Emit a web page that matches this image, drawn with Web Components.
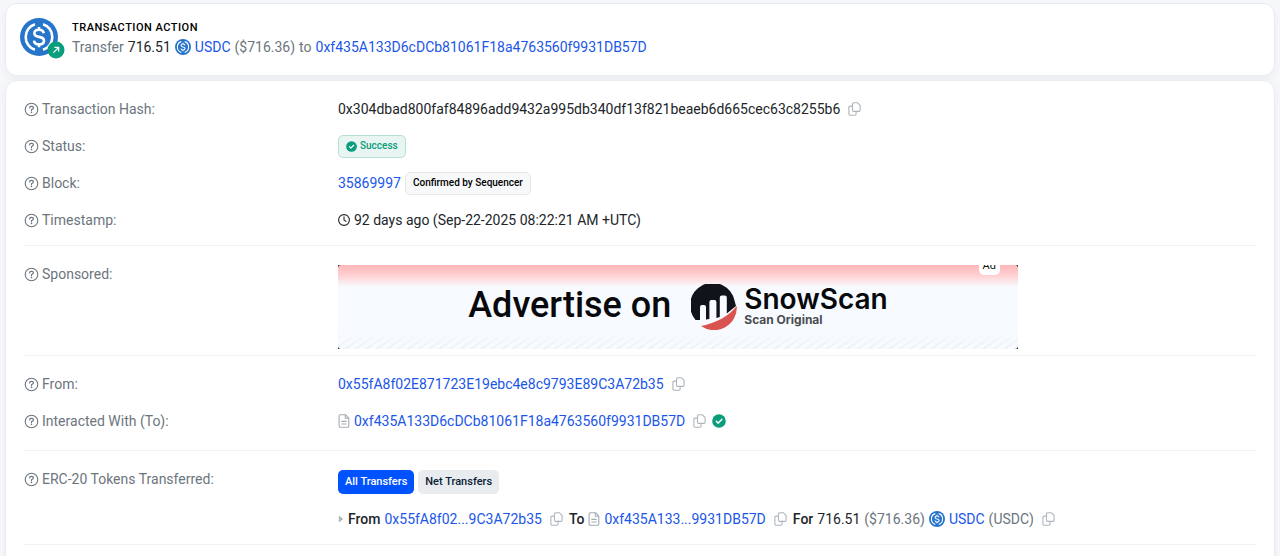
<!DOCTYPE html>
<html lang="en">
<head>
<meta charset="utf-8">
<meta name="viewport" content="width=device-width, initial-scale=1">
<title>Transaction Details</title>
<style>
  body {
    margin: 0;
    background: #f7f8fa;
    color: #212529;
    font: 14px/24px Roboto, sans-serif;
    --link: #1a56e8;
    --muted: #6c757d;
    --line: #eff1f3;
    --green: #0a9d7c;
  }
  main {
    display: flex;
    flex-direction: column;
    gap: 4px;
    padding: 3px 5px 0;
    height: 100vh;
    box-sizing: border-box;
    overflow: hidden;
  }
  tx-card { flex: none; }
</style>
</head>
<body>

<template id="txCard">
  <style>
    :host {
      display: block;
      padding: 16px 18px;
      border: 1px solid #e9ecef;
      border-radius: 12px;
      background: #fff;
      box-shadow: 0 4px 8px rgba(189, 197, 209, .2);
    }
  </style>
  <slot></slot>
</template>

<template id="txAction">
  <style>
    :host { display: flex; align-items: flex-start; gap: 8px; margin-left: -4px; min-height: 39px; }
    .logo { position: relative; display: flex; width: 44px; margin-top: -2px; }
    .badge { position: absolute; left: 27px; top: 23px; display: flex; }
    h1 { margin: 0; color: #000; font-size: 11px; line-height: 14px; font-weight: 500; text-transform: uppercase; letter-spacing: .5px; }
    .body { padding-top: 1px; }
    .line { display: flex; align-items: center; gap: 4px; color: var(--muted); }
  </style>
  <div class="logo">
    <usdc-logo size="38"></usdc-logo>
    <span class="badge">
      <svg width="18" height="18" viewBox="0 0 18 18" aria-hidden="true">
        <circle cx="9" cy="9" r="8.5" fill="#0a9d7c"/>
        <path d="M6.4 11.6 11.4 6.600M7.400 6.400h4.200v4.200" fill="none" stroke="#fff" stroke-width="1.300"/>
      </svg>
    </span>
  </div>
  <div class="body">
    <h1><slot name="title"></slot></h1>
    <div class="line"><slot></slot></div>
  </div>
</template>

<template id="txSection">
  <style>
    :host { display: flex; flex-direction: column; gap: 13px; padding: 16px 0 13px; border-bottom: 1px solid var(--line); }
    :host(:first-of-type) { padding-top: 0; }
    :host([tight]) { padding-bottom: 6px; }
    :host([loose]) { padding-bottom: 17px; }
  </style>
  <slot></slot>
</template>

<template id="txRow">
  <style>
    :host { display: grid; grid-template-columns: 314px minmax(0, 1fr); }
    .label { display: flex; align-items: center; gap: 3px; height: 24px; color: var(--muted); }
    .value { display: flex; align-items: center; gap: 4px; min-height: 24px; white-space: nowrap; }
    :host([stack]) .value { flex-direction: column; align-items: flex-start; gap: 13px; padding-top: 3px; }
  </style>
  <div class="label">
    <svg width="15" height="15" viewBox="0 0 15 15" aria-hidden="true">
      <circle cx="7.500" cy="7.500" r="6.300" fill="none" stroke="#6c757d" stroke-width="1.100"/>
      <path d="M5.600 5.900c0-1 .700-1.600 1.700-1.600h.5c.9 0 1.600.7 1.600 1.500 0 .6-.3 1-.8 1.300l-1.100.7v.8" fill="none" stroke="#6c757d" stroke-width="1.200" stroke-linecap="round"/>
      <circle cx="7.500" cy="10.400" r=".8" fill="#6c757d"/>
    </svg>
    <slot name="label"></slot>
  </div>
  <div class="value"><slot></slot></div>
</template>

<template id="txLine">
  <style>
    :host { display: flex; align-items: center; gap: 4px; }
    :host([buttons]) { gap: 4px; }
  </style>
  <slot></slot>
</template>

<template id="txLink">
  <style>
    :host { display: inline-block; }
    a { color: var(--link); text-decoration: none; }
    a:hover { color: #0034c4; }
  </style>
  <a href="#"><slot></slot></a>
</template>

<template id="txBadge">
  <style>
    :host {
      display: inline-flex;
      align-items: center;
      gap: 3px;
      box-sizing: border-box;
      height: 23px;
      padding: 0 7px;
      border: 1px solid #e6e8ea;
      border-radius: 5px;
      background: #f8f9fa;
      color: #000;
      font-size: 10px;
      font-weight: 500;
    }
    :host([success]) { border-color: #b5e0d6; background: #e9f5f2; color: var(--green); }
  </style>
  <slot></slot>
</template>

<template id="copyButton">
  <style>
    :host { display: inline-flex; margin: 0 2px 0 4px; }
    button { display: flex; padding: 0; border: 0; background: none; cursor: pointer; }
  </style>
  <button type="button" aria-label="Copy">
    <svg width="13" height="14" viewBox="0 0 13 14" fill="none" stroke="#adb5bd" stroke-width="1.100" stroke-linejoin="round" aria-hidden="true">
      <path d="M5.600.800h3.900l2.600 2.500v5c0 .7-.4 1.100-1.100 1.100H5.600c-.7 0-1.100-.4-1.100-1.100V1.900c0-.7.4-1.100 1.100-1.100z"/>
      <path d="M4.400 4.100H2c-.7 0-1.100.4-1.100 1.100v6.900c0 .7.400 1.100 1.100 1.100h5c.7 0 1.100-.4 1.100-1.100V9.600"/>
    </svg>
  </button>
</template>

<template id="tabButton">
  <style>
    :host { display: inline-flex; }
    button {
      height: 24px;
      padding: 0 7px;
      border: 0;
      border-radius: 5px;
      background: #e9ecef;
      color: #081d35;
      font: 500 11px/24px Roboto, sans-serif;
      cursor: pointer;
    }
    :host([active]) button { background: #0052ff; color: #fff; }
  </style>
  <button type="button"><slot></slot></button>
</template>

<template id="adBanner">
  <style>
    :host { display: block; width: 100%; max-width: 680px; background: #222; }
    .ad {
      position: relative;
      display: flex;
      align-items: center;
      justify-content: center;
      gap: 20px;
      height: 84px;
      overflow: hidden;
      border-radius: 3px;
      color: #08090c;
      background:
        linear-gradient(rgba(247, 251, 254, 1) 82%, rgba(247, 251, 254, .3)) 0 0 / 0 0 no-repeat,
        linear-gradient(#ffb6b8, #ffcfd1 10px, #f8fbff 22px, rgba(247, 251, 255, 0) 23px),
        linear-gradient(#f7fbff 68px, rgba(247, 251, 255, .5)),
        repeating-linear-gradient(145deg, #e4e7ea 0 2px, #f7fbff 2px 6px);
    }
    .lead { font-size: 36px; line-height: 80px; font-weight: 500; padding-bottom: 4px; }
    .brand { display: flex; align-items: center; gap: 7px; }
    .name { font: 600 28px/26px Inter, sans-serif; }
    .sub { font: 700 12px/16px Inter, sans-serif; color: #4a4c50; }
    .tag {
      position: absolute;
      top: -8px;
      right: 18px;
      padding: 0 4px;
      border-radius: 5px;
      background: #fff;
      color: #111;
      font-size: 11px;
      line-height: 18px;
    }
  </style>
  <div class="ad">
    <span class="lead">Advertise on</span>
    <div class="brand">
      <svg width="46" height="46" viewBox="0 0 46 46" aria-hidden="true">
        <path d="M7 36H4.500A22.500 22.500 0 1 1 43.500 16.500L45 22 35.800 29.500V13.500a2 2 0 0 0-2-2h-3a2 2 0 0 0-2 2V33l-3.400 1V18a2 2 0 0 0-2-2h-3a2 2 0 0 0-2 2v17l-3.400.5V23a2 2 0 0 0-2-2h-2a2 2 0 0 0-2 2v13z" fill="#11131a"/>
        <path d="M10 42C25 39 38 32 45.800 22A22.700 22.700 0 0 1 10 42z" fill="#d9534f"/>
      </svg>
      <div>
        <div class="name">SnowScan</div>
        <div class="sub">Scan Original</div>
      </div>
    </div>
    <span class="tag">Ad</span>
  </div>
</template>

<main>
  <tx-card>
    <tx-action>
      <span slot="title">Transaction Action</span>
      <span>Transfer</span>
      <span style="color: #212529">716.51</span>
      <usdc-logo size="16"></usdc-logo>
      <tx-link>USDC</tx-link>
      <span>($716.36)</span>
      <span>to</span>
      <tx-link>0xf435A133D6cDCb81061F18a4763560f9931DB57D</tx-link>
    </tx-action>
  </tx-card>

  <tx-card>
    <tx-section>
      <tx-row>
        <span slot="label">Transaction Hash:</span>
        <span>0x304dbad800faf84896add9432a995db340df13f821beaeb6d665cec63c8255b6</span>
        <copy-button></copy-button>
      </tx-row>
      <tx-row>
        <span slot="label">Status:</span>
        <tx-badge success><tx-icon name="check" size="11"></tx-icon>Success</tx-badge>
      </tx-row>
      <tx-row>
        <span slot="label">Block:</span>
        <tx-link>35869997</tx-link>
        <tx-badge>Confirmed by Sequencer</tx-badge>
      </tx-row>
      <tx-row>
        <span slot="label">Timestamp:</span>
        <tx-icon name="clock" size="12"></tx-icon>
        <span>92 days ago (Sep-22-2025 08:22:21 AM +UTC)</span>
      </tx-row>
    </tx-section>

    <tx-section tight>
      <tx-row stack>
        <span slot="label">Sponsored:</span>
        <ad-banner></ad-banner>
      </tx-row>
    </tx-section>

    <tx-section loose>
      <tx-row>
        <span slot="label">From:</span>
        <tx-link>0x55fA8f02E871723E19ebc4e8c9793E89C3A72b35</tx-link>
        <copy-button></copy-button>
      </tx-row>
      <tx-row>
        <span slot="label">Interacted With (To):</span>
        <tx-icon name="file" size="12"></tx-icon>
        <tx-link>0xf435A133D6cDCb81061F18a4763560f9931DB57D</tx-link>
        <copy-button></copy-button>
        <tx-icon name="check" size="14"></tx-icon>
      </tx-row>
    </tx-section>

    <tx-section>
      <tx-row stack>
        <span slot="label">ERC-20 Tokens Transferred:</span>
        <tx-line>
          <tab-button active>All Transfers</tab-button>
          <tab-button>Net Transfers</tab-button>
        </tx-line>
        <tx-line>
          <tx-icon name="caret" size="6"></tx-icon>
          <span style="font-weight: 500">From</span>
          <tx-link>0x55fA8f02...9C3A72b35</tx-link>
          <copy-button></copy-button>
          <span style="font-weight: 500">To</span>
          <tx-icon name="file" size="12"></tx-icon>
          <tx-link>0xf435A133...9931DB57D</tx-link>
          <copy-button></copy-button>
          <span style="font-weight: 500">For</span>
          <span>716.51</span>
          <span style="color: var(--muted)">($716.36)</span>
          <usdc-logo size="16"></usdc-logo>
          <tx-link>USDC</tx-link>
          <span style="color: var(--muted)">(USDC)</span>
          <copy-button></copy-button>
        </tx-line>
      </tx-row>
    </tx-section>
    <tx-section></tx-section>
  </tx-card>
</main>

<script>
  (function () {
    'use strict';

    function define(name, templateId) {
      customElements.define(name, class extends HTMLElement {
        constructor() {
          super();
          const temp = document.querySelector(templateId);
          this.attachShadow({ mode: 'open' }).appendChild(document.importNode(temp.content, true));
        }
      });
    }

    const icons = {
      check: '<svg viewBox="0 0 14 14"><circle cx="7" cy="7" r="6.800" fill="#0a9d7c"/><path d="M4.300 7.200l1.900 1.900 3.600-3.700" fill="none" stroke="#fff" stroke-width="1.500" stroke-linecap="round" stroke-linejoin="round"/></svg>',
      clock: '<svg viewBox="0 0 12 12" fill="none" stroke="#212529" stroke-width="1.100" stroke-linecap="round"><circle cx="6" cy="6" r="5.400"/><path d="M6 2.900V6l2 1.400"/></svg>',
      file: '<svg viewBox="0 0 12 14" fill="none" stroke="#a3aab1" stroke-width="1.100" stroke-linejoin="round"><path d="M2.400.700h5l3.400 3.400v7.900c0 .8-.5 1.300-1.300 1.300H2.400c-.8 0-1.300-.5-1.300-1.300V2C1.100 1.200 1.600.700 2.400.700z"/><path d="M7.300.800v3.400h3.500M3.400 7.400h5.200M3.400 10h5.200"/></svg>',
      caret: '<svg viewBox="0 0 6 8"><path d="M.800.500 5.200 4 .800 7.500z" fill="#adb5bd"/></svg>'
    };

    class TxIcon extends HTMLElement {
      constructor() {
        super();
        this.attachShadow({ mode: 'open' });
      }

      connectedCallback() {
        const size = this.getAttribute('size');
        this.shadowRoot.innerHTML = `
          <style>
            :host { display: inline-flex; flex: none; }
            svg { display: block; width: ${size}px; }
          </style>
          ${icons[this.getAttribute('name')]}`;
      }
    }

    class UsdcLogo extends HTMLElement {
      constructor() {
        super();
        this.attachShadow({ mode: 'open' });
      }

      connectedCallback() {
        const size = this.getAttribute('size');
        this.shadowRoot.innerHTML = `
          <style>
            :host { display: inline-flex; flex: none; }
            svg { display: block; width: ${size}px; height: ${size}px; }
          </style>
          <svg viewBox="0 0 32 32" role="img" aria-label="USDC">
            <circle cx="16" cy="16" r="16" fill="#2775ca"/>
            <path d="M12.600 5.200C7.900 6.600 4.800 11 4.800 16s3.100 9.400 7.800 10.800M19.400 5.200c4.700 1.400 7.800 5.800 7.800 10.800s-3.100 9.400-7.800 10.800" fill="none" stroke="#fff" stroke-width="2.200"/>
            <path d="M20 12.800c-.3-1.800-1.600-2.900-4-2.900s-3.900 1.200-3.900 2.900c0 2 1.600 2.700 4 3.100 2.500.4 4.100 1.200 4.100 3.200 0 1.900-1.600 3.100-4.200 3.100s-4-1.200-4.200-3.200M16 7.600v2.400M16 22v2.600" fill="none" stroke="#fff" stroke-width="2.200"/>
          </svg>`;
      }
    }

    define('tx-card', '#txCard');
    define('tx-action', '#txAction');
    define('tx-section', '#txSection');
    define('tx-row', '#txRow');
    define('tx-line', '#txLine');
    define('tx-link', '#txLink');
    define('tx-badge', '#txBadge');
    define('copy-button', '#copyButton');
    define('tab-button', '#tabButton');
    define('ad-banner', '#adBanner');
    customElements.define('tx-icon', TxIcon);
    customElements.define('usdc-logo', UsdcLogo);
  })()
</script>
</body>
</html>
